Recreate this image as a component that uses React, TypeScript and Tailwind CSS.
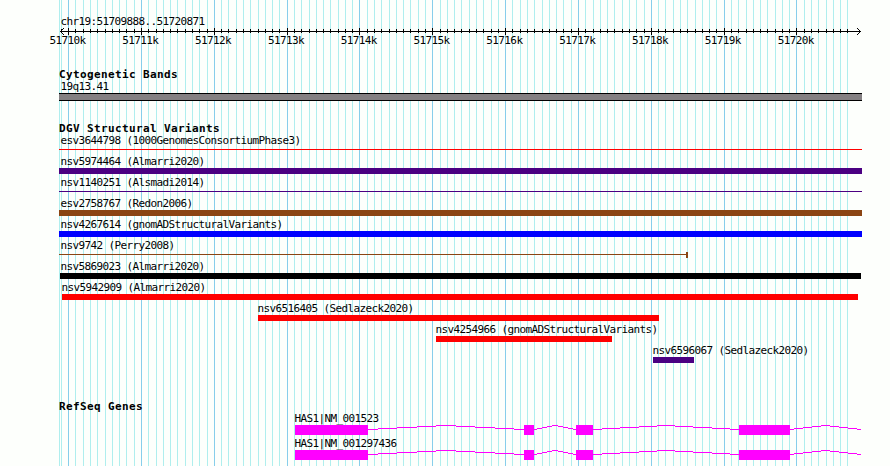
import { clsx } from "clsx";

const START = 51709888;
const END = 51720872;
const LEFT = 60;
const WIDTH = 800;

const toX = (bp: number) =>
  Math.round(LEFT + ((bp - START) / (END - START)) * WIDTH);

const ticks = Array.from({ length: 109 }).map((_, i) => {
  const bp = 51709900 + i * 100;
  return { bp, x: toX(bp), major: bp % 1000 === 0 };
});

interface Variant {
  name: string;
  labelX: number;
  start: number;
  end: number;
  color: string;
  thin?: boolean;
  cap?: boolean;
}

const variants: Variant[] = [
  { name: "esv3644798 (1000GenomesConsortiumPhase3)", labelX: 60.4, start: 59, end: 862, color: "bg-[#ff0000]", thin: true },
  { name: "nsv5974464 (Almarri2020)", labelX: 60.4, start: 59, end: 862, color: "bg-[#4b0082]" },
  { name: "nsv1140251 (Alsmadi2014)", labelX: 60.4, start: 59, end: 862, color: "bg-[#4b0082]", thin: true },
  { name: "esv2758767 (Redon2006)", labelX: 60.4, start: 59, end: 862, color: "bg-[#8b4513]" },
  { name: "nsv4267614 (gnomADStructuralVariants)", labelX: 60.4, start: 59, end: 862, color: "bg-[#0000ff]" },
  { name: "nsv9742 (Perry2008)", labelX: 60.4, start: 59, end: 688, color: "bg-[#8b4513]", thin: true, cap: true },
  { name: "nsv5869023 (Almarri2020)", labelX: 60.4, start: 60, end: 861, color: "bg-black" },
  { name: "nsv5942909 (Almarri2020)", labelX: 61.4, start: 62, end: 858, color: "bg-[#ff0000]" },
  { name: "nsv6516405 (Sedlazeck2020)", labelX: 257.4, start: 258, end: 659, color: "bg-[#ff0000]" },
  { name: "nsv4254966 (gnomADStructuralVariants)", labelX: 435.4, start: 436, end: 612, color: "bg-[#ff0000]" },
  { name: "nsv6596067 (Sedlazeck2020)", labelX: 652.4, start: 653, end: 694, color: "bg-[#4b0082]" },
];

const genes = ["HAS1|NM_001523", "HAS1|NM_001297436"];

const exons = [
  [295, 368],
  [524, 534],
  [576, 593],
  [739, 790],
];

const introns = [
  [368, 524],
  [534, 576],
  [593, 739],
  [790, 861],
];

// one-pixel runs that climb to the middle of the intron and back down
function intronPath(from: number, to: number) {
  const step = (to - from) / 8;
  const edges = [0, 0.5, 1.5, 2.5, 3.5, 4.5, 5.5, 6.5, 7.5, 8].map((n) =>
    Math.round(from + n * step),
  );
  return [4, 3, 2, 1, 0, 1, 2, 3, 4]
    .map((y, i) => `M${edges[i]} ${y}H${edges[i + 1]}v1H${edges[i]}z`)
    .join("");
}

function GridLines() {
  return (
    <svg
      className="absolute inset-0"
      width="890"
      height="466"
      shapeRendering="crispEdges"
    >
      <rect x="59" y="0" width="1" height="466" fill="#afeeee" />
      {ticks.map((t) => (
        <rect
          key={t.bp}
          x={t.x}
          y="0"
          width="1"
          height="466"
          fill={t.major ? "#87ceeb" : "#afeeee"}
        />
      ))}
    </svg>
  );
}

function Ruler() {
  return (
    <svg
      className="block"
      width="890"
      height="8"
      viewBox="0 27 890 8"
      shapeRendering="crispEdges"
    >
      <rect x="60" y="31" width="801" height="1" />
      {ticks.map((t) => (
        <rect
          key={t.bp}
          x={t.x}
          y={t.major ? 28 : 29}
          width="1"
          height={t.major ? 7 : 4}
        />
      ))}
      <path d="M61 30h1v1h-1zM62 29h1v1h-1zM63 28h1v1h-1zM61 32h1v1h-1zM62 33h1v1h-1zM63 34h1v1h-1z" />
      <path d="M859 30h1v1h-1zM858 29h1v1h-1zM857 28h1v1h-1zM859 32h1v1h-1zM858 33h1v1h-1zM857 34h1v1h-1z" />
    </svg>
  );
}

function TrackTitle({ children }: { children: string }) {
  return (
    <h2 className="h-3 pl-[59px] text-[11px] leading-3 font-bold tracking-[0.378px]">
      {children}
    </h2>
  );
}

function VariantRow({ variant }: { variant: Variant }) {
  const { name, labelX, start, end, color, thin, cap } = variant;
  return (
    <div className="h-[21px]">
      <div className="h-3" style={{ paddingLeft: labelX }}>
        {name}
      </div>
      <div
        className="flex h-1.5 items-start"
        style={{ marginLeft: start, width: end - start }}
      >
        <div className={clsx("flex-1", thin ? "mt-0.5 h-px" : "h-1.5", color)} />
        {cap && <div className={clsx("h-1.5 w-0.5", color)} />}
      </div>
    </div>
  );
}

function GeneRow({ name }: { name: string }) {
  return (
    <div className="h-[25px]">
      <div className="h-3 pl-[294.4px]">{name}</div>
      <svg
        className="block"
        width="890"
        height="10"
        fill="#ff00ff"
        shapeRendering="crispEdges"
      >
        {introns.map(([from, to]) => (
          <path key={from} d={intronPath(from, to)} />
        ))}
        {exons.map(([from, to]) => (
          <rect key={from} x={from} y="0" width={to - from} height="10" />
        ))}
      </svg>
    </div>
  );
}

export default function App() {
  return (
    <div className="relative h-[466px] w-[890px] overflow-hidden bg-[#fdfffc]">
      <GridLines />
      <div className="relative pt-4 font-['DejaVu_Sans_Mono',monospace] text-[11px] leading-3 tracking-[-0.622px] whitespace-pre text-black">
        <div className="h-[11px] pl-[60.4px]">chr19:51709888..51720871</div>
        <Ruler />
        <div className="flex h-3 pl-[31px]">
          {ticks
            .filter((t) => t.major)
            .map((t) => (
              <div key={t.bp} className="w-[72.83px] shrink-0 text-center">
                {t.bp / 1000}k
              </div>
            ))}
        </div>

        <section className="pt-[22px]">
          <TrackTitle>Cytogenetic Bands</TrackTitle>
          <div className="h-3 pl-[60.4px]">19q13.41</div>
          <div className="ml-[59px] h-2 w-[803px] border-y border-black bg-[#848082]" />
        </section>

        <section className="pt-[22px]">
          <TrackTitle>DGV Structural Variants</TrackTitle>
          {variants.map((v) => (
            <VariantRow key={v.name} variant={v} />
          ))}
        </section>

        <section className="pt-[35px]">
          <TrackTitle>RefSeq Genes</TrackTitle>
          {genes.map((name) => (
            <GeneRow key={name} name={name} />
          ))}
        </section>
      </div>
    </div>
  );
}
